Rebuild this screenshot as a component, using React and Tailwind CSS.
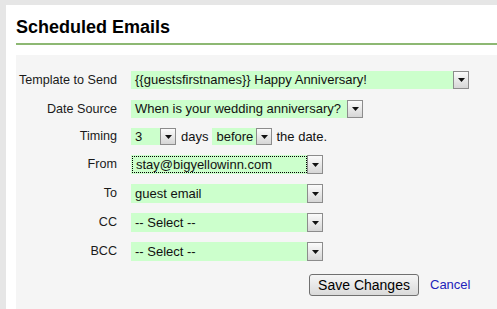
import React from "react";

function Arrow() {
  return (
    <span className="flex h-full w-[16px] shrink-0 items-center justify-center border border-[#8c8c8c] bg-gradient-to-b from-[#fbfbfb] to-[#d6d6d6]">
      <svg width="7" height="4" viewBox="0 0 7 4">
        <path d="M0 0h7L3.5 4z" fill="#111" />
      </svg>
    </span>
  );
}

function Select({ value, width, focused }) {
  return (
    <div className="flex h-full bg-[#ccffcc]" style={{ width }}>
      <div className="flex min-w-0 flex-1 items-center pl-[1px]">
        <span
          className={`flex h-[calc(100%-2px)] w-full items-center whitespace-nowrap pl-[3px] text-[13px] text-[#111] ${
            focused ? "border border-dotted border-black" : ""
          }`}
        >
          {value}
        </span>
      </div>
      <Arrow />
    </div>
  );
}

function Row({ label, h, mt, children }) {
  return (
    <div className={`flex items-center ${h} ${mt}`}>
      <div className="w-[101px] shrink-0 whitespace-nowrap text-right text-[12.6px] text-[#1a1a1a]">
        {label}
      </div>
      <div className="ml-[14px] flex h-full items-center">{children}</div>
    </div>
  );
}

export default function App() {
  return (
    <div className="flex h-[309px] w-[497px] overflow-hidden bg-[#e6e6e6] pl-[6px] pt-[5px] font-['Liberation_Sans',Arial,sans-serif]">
      <div className="flex flex-1 flex-col bg-white pl-[10px]">
        <h1 className="mt-[11px] text-[18px] font-bold leading-[22px] text-black">
          Scheduled Emails
        </h1>
        <div className="mt-[5px] h-[2px] bg-[#8db873]" />
        <div className="mt-[10px] flex-1 bg-[#f5f5f5] pt-[16px]">
          <Row label="Template to Send" h="h-[18px]" mt="">
            <Select
              value="{{guestsfirstnames}} Happy Anniversary!"
              width={338}
            />
          </Row>
          <Row label="Date Source" h="h-[18px]" mt="mt-[11px]">
            <Select value="When is your wedding anniversary?" width={232} />
          </Row>
          <Row label="Timing" h="h-[17px]" mt="mt-[10px]">
            <Select value="3" width={45} />
            <span className="ml-[5px] mr-[4px] text-[13px] text-[#111]">days</span>
            <Select value="before" width={60} />
            <span className="ml-[4px] text-[13px] text-[#111]">
              the date.
            </span>
          </Row>
          <Row label="From" h="h-[19px]" mt="mt-[10px]">
            <Select value="stay@bigyellowinn.com" width={192} focused />
          </Row>
          <Row label="To" h="h-[19px]" mt="mt-[10px]">
            <Select value="guest email" width={192} />
          </Row>
          <Row label="CC" h="h-[19px]" mt="mt-[10px]">
            <Select value="-- Select --" width={192} />
          </Row>
          <Row label="BCC" h="h-[19px]" mt="mt-[10px]">
            <Select value="-- Select --" width={192} />
          </Row>
          <div className="mt-[13px] flex items-center">
            <button className="ml-[293px] h-[22px] w-[110px] rounded-[3px] border border-[#707070] bg-gradient-to-b from-[#f6f6f6] to-[#dadada] text-[14px] text-black">
              Save Changes
            </button>
            <a className="ml-[11px] text-[13px] text-[#2222bb]">Cancel</a>
          </div>
        </div>
      </div>
    </div>
  );
}
